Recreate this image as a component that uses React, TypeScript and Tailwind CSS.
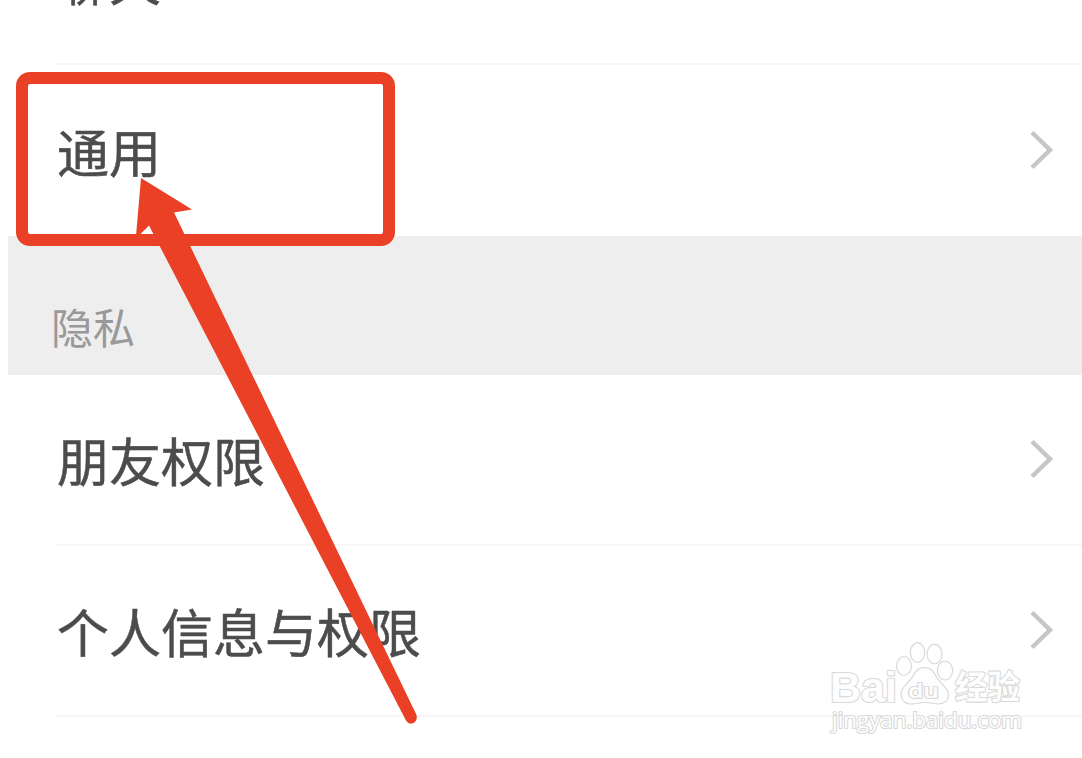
const rowText = "text-[52px] leading-[52px] text-[#4c4c4c] [-webkit-text-stroke:0.5px_#4c4c4c]";

function Chevron() {
  return (
    <svg className="mb-0.5 h-11 w-7 shrink-0" viewBox="0 0 28 44" fill="none">
      <path d="M4 4.5 L22 22 L4 39.5" stroke="#c6c6c6" strokeWidth="4.5" />
    </svg>
  );
}

function Row({ label, divider = true }: { label: string; divider?: boolean }) {
  return (
    <div className="flex h-[171px] shrink-0 pl-12">
      <div
        className={`flex flex-1 items-center justify-between pr-[26px] ${
          divider ? "border-b-2 border-[#f7f7f7]" : ""
        }`}
      >
        <span className={`pl-px ${rowText}`}>{label}</span>
        <Chevron />
      </div>
    </div>
  );
}

function Watermark() {
  return (
    <svg
      className="absolute left-[820px] top-[636px]"
      width="212"
      height="104"
      viewBox="820 636 212 104"
      fill="#fefefe"
      stroke="#d9d9d9"
      strokeWidth="1.2"
    >
      <ellipse cx="904" cy="666" rx="7.5" ry="9.5" />
      <ellipse cx="917.5" cy="652.5" rx="7.2" ry="9.8" />
      <ellipse cx="934.5" cy="654" rx="7.5" ry="9.8" />
      <ellipse cx="945" cy="670.5" rx="7.7" ry="9.5" />
      <path d="M924.5 667.5 C931 667.5 934 672 937 678 C941 684 948.5 688 948.5 695 C948.5 701 944 704 938 704 C933 704 930 702.5 925 702.5 C919 702.5 917 704 911 704 C904.500 704 901 700 901 694 C901 687 908 684 912 677.500 C915 672 918 667.500 924.500 667.500 Z" />
      <g
        fontFamily="'Liberation Sans', 'Noto Sans CJK SC', sans-serif"
        strokeWidth="2.2"
        paintOrder="stroke"
        strokeLinejoin="round"
      >
        <text x="830" y="701.5" fontSize="43" fontWeight="700" textLength="67" lengthAdjust="spacingAndGlyphs">
          Bai
        </text>
        <text
          x="908"
          y="697.5"
          fontSize="20"
          fontFamily="'Open Sans', sans-serif"
          fontWeight="600"
          textLength="31"
          lengthAdjust="spacingAndGlyphs"
        >
          du
        </text>
        <text x="955" y="699" fontSize="32.5" fontWeight="700">
          经验
        </text>
        <text
          x="832"
          y="728"
          fontSize="22"
          fontFamily="'Open Sans', sans-serif"
          textLength="190"
          lengthAdjust="spacingAndGlyphs"
        >
          jingyan.baidu.com
        </text>
      </g>
    </svg>
  );
}

// Red frame around the "通用" entry and the arrow pointing at it
function Highlight() {
  return (
    <>
      <div className="absolute left-4 top-[72px] h-[174px] w-[379px] rounded-[14px] border-[12px] border-[#ea4026]" />
      <svg className="absolute left-0 top-0" width="1082" height="758" fill="#ea4026">
        <path d="M141 178 L192 209.500 L174 212.500 L416.300 714.500 Q418.200 720.500 413 723.300 Q408.500 724.800 406 720.500 L149 225.500 L140.500 234 L136 236 Z" />
      </svg>
    </>
  );
}

export default function App() {
  return (
    <div
      className="relative h-[758px] w-[1082px] overflow-hidden bg-white pl-2 font-['Noto_Sans_CJK_SC',sans-serif]"
      lang="zh-CN"
    >
      <div className="flex h-[65px] flex-col justify-end overflow-hidden">
        <Row label="聊天" />
      </div>
      <Row label="通用" divider={false} />
      <div className="h-[139px] bg-[#eeeeee] pl-[43px] pt-[69px] text-[42px] leading-[42px] text-[#999999]">
        隐私
      </div>
      <Row label="朋友权限" />
      <Row label="个人信息与权限" />
      <Watermark />
      <Highlight />
    </div>
  );
}
